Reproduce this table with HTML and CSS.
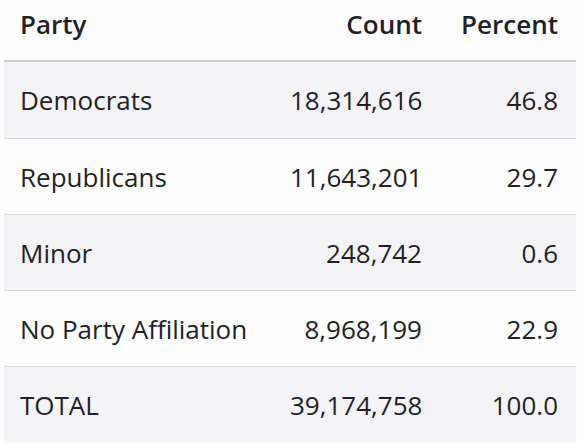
FILE: index.html
```html
<!DOCTYPE html>
<html>
<head>
<meta charset="utf-8">
<link rel="stylesheet" href="styles.css">
</head>
<body>
<table class="tbl">
  <colgroup>
    <col class="c1"><col class="c2"><col class="c3">
  </colgroup>
  <thead>
    <tr><th class="l">Party</th><th class="r">Count</th><th class="r">Percent</th></tr>
  </thead>
  <tbody>
    <tr class="alt"><td class="l">Democrats</td><td class="r">18,314,616</td><td class="r">46.8</td></tr>
    <tr><td class="l">Republicans</td><td class="r">11,643,201</td><td class="r">29.7</td></tr>
    <tr class="alt"><td class="l">Minor</td><td class="r">248,742</td><td class="r">0.6</td></tr>
    <tr><td class="l">No Party Affiliation</td><td class="r">8,968,199</td><td class="r">22.9</td></tr>
    <tr class="alt"><td class="l">TOTAL</td><td class="r">39,174,758</td><td class="r">100.0</td></tr>
  </tbody>
</table>
</body>
</html>
```
FILE: styles.css
```css
html, body {
  margin: 0;
  padding: 0;
  background: #fdfdfe;
}
body {
  padding: 0 6px 0 4px;
  font-family: "Open Sans", "DejaVu Sans", sans-serif;
  color: #221f26;
}
.tbl {
  width: 572px;
  border-collapse: collapse;
  table-layout: fixed;
  font-size: 26px;
}
.c1 { width: 270px; }
.c2 { width: 165px; }
.c3 { width: 137px; }
.tbl th {
  font-weight: 600;
  height: 48px;
  padding: 0 17px 12px 16px;
  border-bottom: 2px solid #cacacf;
  vertical-align: middle;
}
.tbl th:last-child { padding-right: 18px; }
.tbl td {
  height: 75px;
  padding: 0 17px 0 16px;
  border-top: 1px solid #dcdce0;
  font-weight: 400;
}
.tbl td:last-child { padding-right: 18px; }
.tbl tbody tr:first-child td { border-top: none; height: 76px; }
.tbl .alt { background: #f4f4f7; }
.l { text-align: left; }
.r { text-align: right; }
```
